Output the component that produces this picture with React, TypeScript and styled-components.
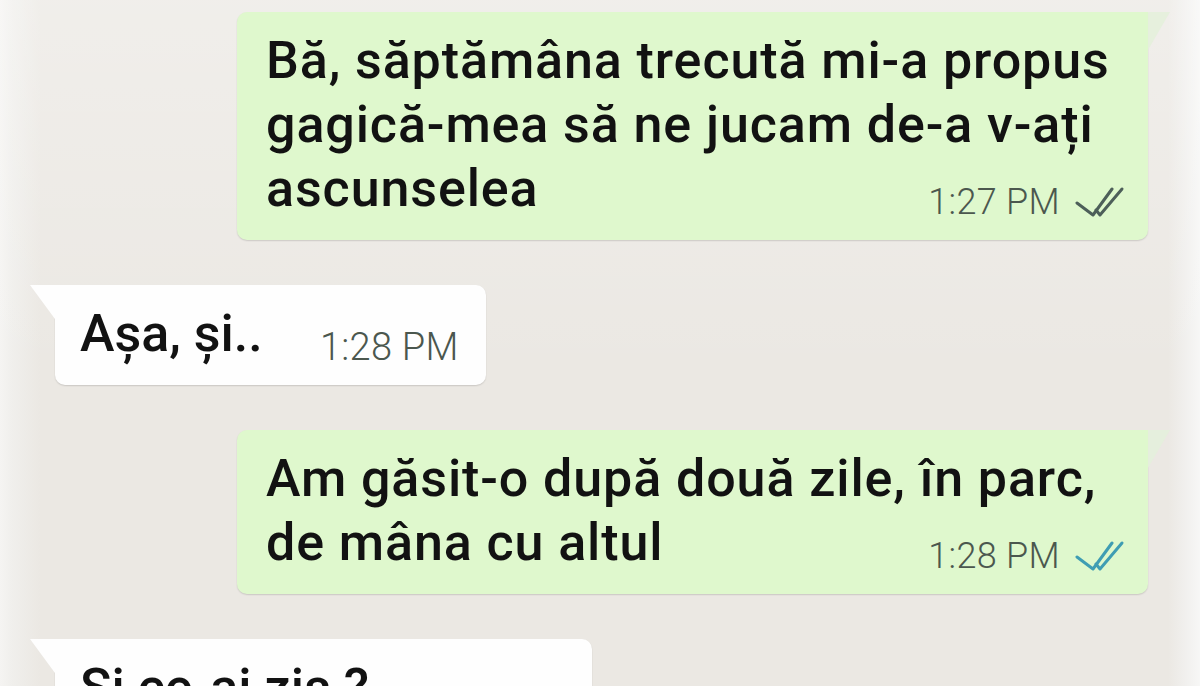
import React from "react";
import styled, { createGlobalStyle } from "styled-components";

const GlobalStyle = createGlobalStyle`
  html, body { margin: 0; padding: 0; }
  body {
    background: #ebe8e3;
    font-family: Roboto, "Noto Sans", "DejaVu Sans", sans-serif;
  }
`;

const Page = styled.div`
  box-sizing: border-box;
  width: 1200px;
  height: 686px;
  overflow: hidden;
  display: flex;
  flex-direction: column;
  gap: 45px;
  padding-top: 12px;
  background:
    linear-gradient(180deg, rgba(255, 255, 255, 0.28) 0, rgba(255, 255, 255, 0) 55%),
    linear-gradient(
      90deg,
      #f5f4f2 0,
      #f0efec 12px,
      #ebe8e3 40px,
      #ebe8e3 1168px,
      #f1f0ee 1186px,
      #f7f7f6 1200px
    );
`;

const Bubble = styled.div<{ $out?: boolean }>`
  position: relative;
  box-sizing: border-box;
  align-self: ${(p) => (p.$out ? "flex-end" : "flex-start")};
  margin: ${(p) => (p.$out ? "0 52px 0 0" : "0 0 0 55px")};
  width: ${(p) => (p.$out ? "911px" : "auto")};
  padding: 17px ${(p) => (p.$out ? 20 : 27)}px 19px ${(p) => (p.$out ? 29 : 25)}px;
  background: ${(p) => (p.$out ? "#dff8cd" : "#fefefe")};
  border-radius: ${(p) => (p.$out ? "10px 0 10px 10px" : "0 10px 10px 10px")};
  box-shadow: 0 1px 1.5px rgba(0, 0, 0, 0.14);
  font-size: 52px;
  line-height: 64px;
  font-weight: 500;
  letter-spacing: ${(p) => (p.$out ? 0.9 : 0)}px;
  color: #121212;

  &::before {
    content: "";
    position: absolute;
    top: 0;
    ${(p) => (p.$out ? "right: -22px;" : "left: -25px;")}
    width: ${(p) => (p.$out ? 22 : 25)}px;
    height: ${(p) => (p.$out ? 38 : 34)}px;
    background: ${(p) => (p.$out ? "rgba(228, 240, 220, 0.9)" : "#fefefe")};
    clip-path: ${(p) =>
      p.$out
        ? "polygon(0 0, 100% 0, 0 100%)"
        : "polygon(0 0, 100% 0, 100% 100%)"};
  }
`;

const Spacer = styled.span<{ $w: number }>`
  display: inline-block;
  width: ${(p) => p.$w}px;
  height: 1px;
`;

const Meta = styled.span<{ $out?: boolean }>`
  position: absolute;
  right: ${(p) => (p.$out ? 23 : 27)}px;
  bottom: 20px;
  display: flex;
  align-items: center;
  gap: 15px;
  font-size: ${(p) => (p.$out ? 36 : 38)}px;
  line-height: 36px;
  font-weight: 300;
  letter-spacing: 0.3px;
  color: #4b574e;
  white-space: nowrap;
`;

const Ticks = styled.svg<{ $read?: boolean }>`
  width: 50px;
  height: 32px;
  flex: none;
  color: ${(p) => (p.$read ? "#3f9db3" : "#4d5f59")};
`;

const DoubleTick = ({ read }: { read?: boolean }) => (
  <Ticks $read={read} viewBox="0 0 50 32" fill="none">
    <path d="M2 17 L18 29 L37 3" stroke="currentColor" strokeWidth="3" strokeLinecap="round" strokeLinejoin="round" />
    <path d="M21 24 L25 29 L47 3" stroke="currentColor" strokeWidth="3" strokeLinecap="round" strokeLinejoin="round" />
  </Ticks>
);

type Msg = {
  out?: boolean;
  lines: string[];
  time: string;
  read?: boolean;
};

const messages: Msg[] = [
  {
    out: true,
    lines: [
      "Bă, săptămâna trecută mi-a propus",
      "gagică-mea să ne jucam de-a v-ați",
      "ascunselea",
    ],
    time: "1:27 PM",
  },
  { lines: ["Așa, și.."], time: "1:28 PM" },
  {
    out: true,
    lines: ["Am găsit-o după două zile, în parc,", "de mâna cu altul"],
    time: "1:28 PM",
    read: true,
  },
  { lines: ["Și ce-ai zis ?"], time: "1:29 PM" },
];

export default function App() {
  return (
    <>
      <GlobalStyle />
      <Page>
        {messages.map((m, i) => (
          <Bubble key={i} $out={m.out}>
            {m.lines.map((l, j) => (
              <React.Fragment key={j}>
                {j > 0 && <br />}
                {l}
              </React.Fragment>
            ))}
            <Spacer $w={m.out ? 215 : 50} />
            <Meta $out={m.out}>
              {m.time}
              {m.out && <DoubleTick read={m.read} />}
            </Meta>
            {!m.out && <Spacer $w={146} />}
          </Bubble>
        ))}
      </Page>
    </>
  );
}
